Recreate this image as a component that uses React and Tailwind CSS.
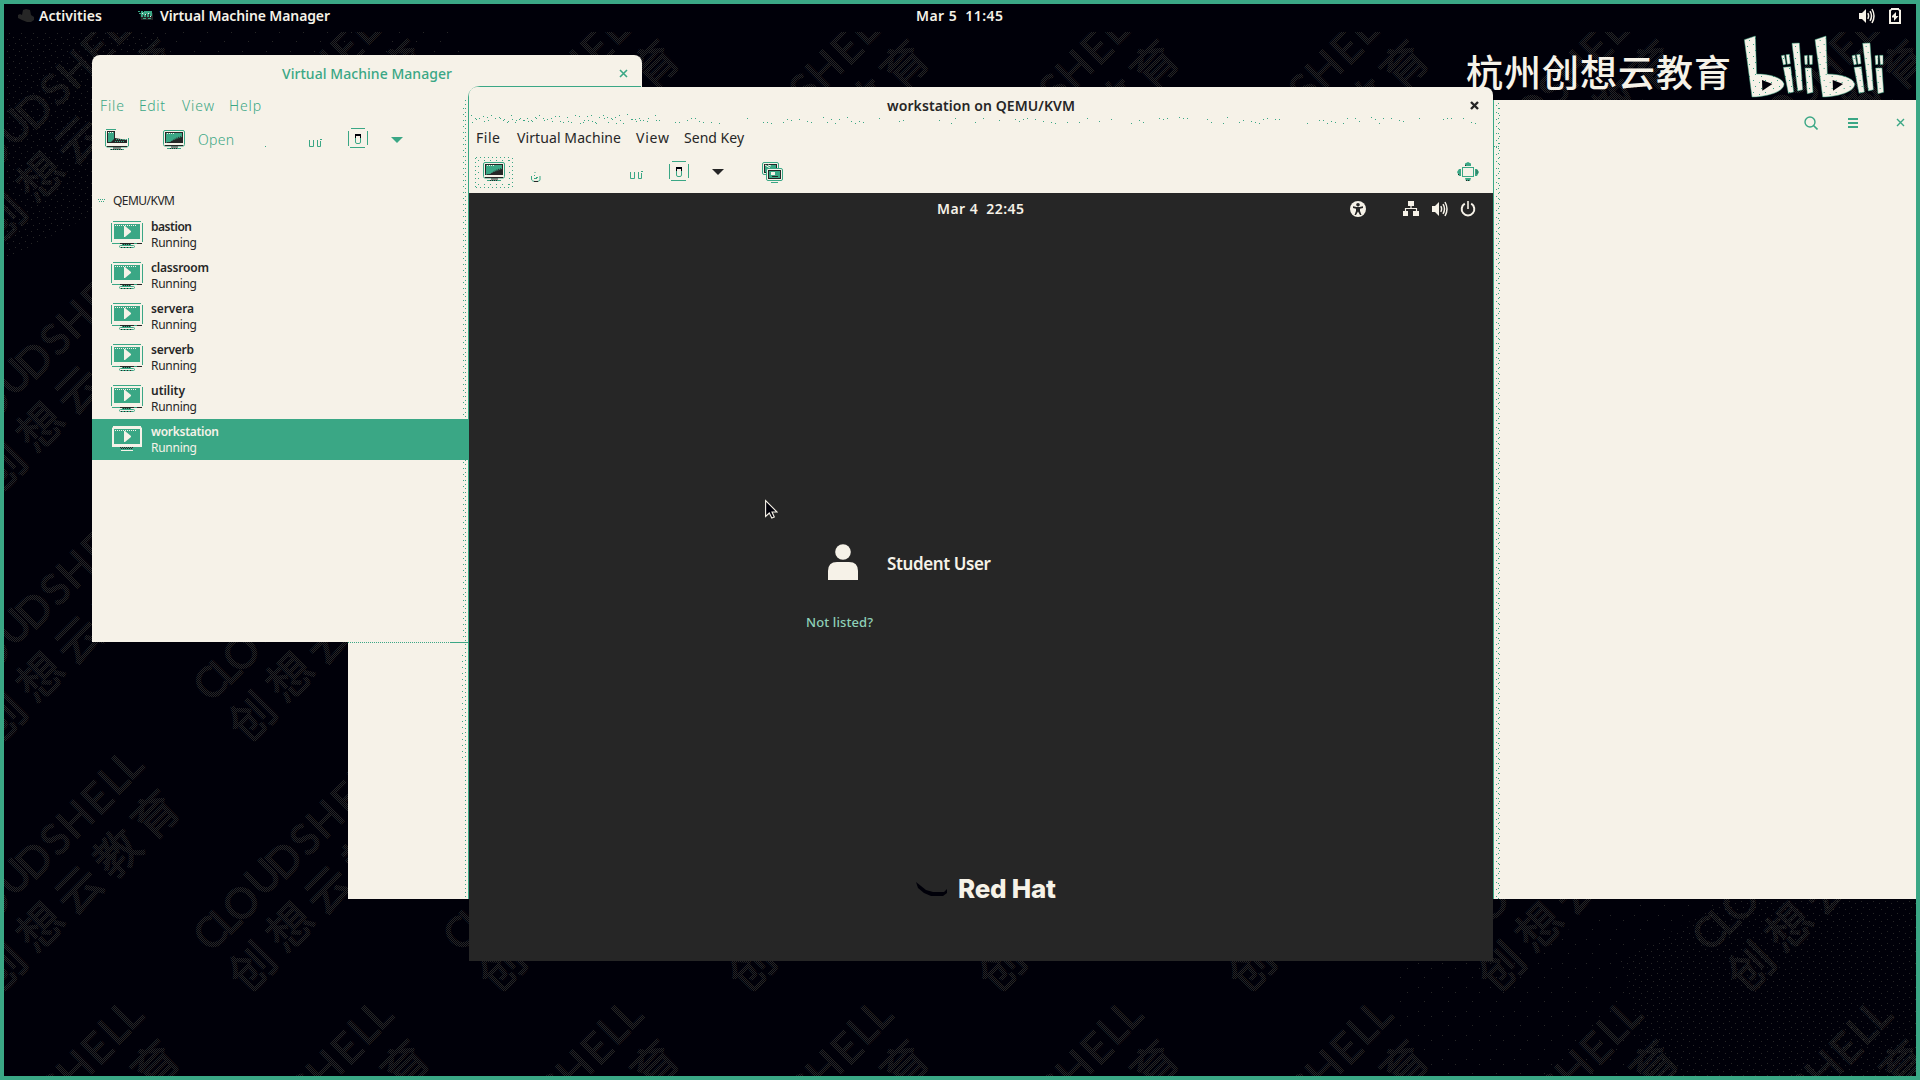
import { useLayoutEffect, useRef, useState } from "react";

const C = { teal: "#3aa785", cream: "#f6f2e8", dark: "#262626", black: "#000009" };

/* Text whose tracking is adjusted so that it spans exactly w pixels. */
function Fit({ w, className = "", children }) {
  const ref = useRef(null);
  const [ls, setLs] = useState(0);
  useLayoutEffect(() => {
    const n = String(children).length;
    const natural = ref.current.getBoundingClientRect().width - ls * n;
    setLs((w - natural) / (n - 1));
  }, [w, children]);
  return (
    <span ref={ref} className={"inline-block whitespace-pre " + className} style={{ letterSpacing: ls + "px", marginRight: -ls + "px" }}>
      {children}
    </span>
  );
}

function Svg({ w, h, className = "", children }) {
  return (
    <svg width={w} height={h} viewBox={`0 0 ${w} ${h}`} className={"shrink-0 " + className}>
      {children}
    </svg>
  );
}

/* ---------- wallpaper ---------- */
const LATIN = [
  ["C", 210, 933], ["L", 225, 919], ["O", 241, 903], ["U", 263, 877], ["D", 284, 860],
  ["S", 305, 839], ["H", 325, 819], ["E", 347, 798], ["L", 363, 779], ["L", 377, 764],
];
const HAN = [["创", 252, 967], ["想", 290, 927], ["云", 328, 890], ["教", 367, 853], ["育", 405, 815]];
const TILES = [];
for (let r = -4; r <= 1; r++) for (let c = -2; c <= 7; c++) TILES.push([c * 249.8, r * 250]);

function Wallpaper() {
  return (
    <svg width="1912" height="1044" viewBox="4 32 1912 1044" className="absolute left-[4px] top-[32px]">
      <defs>
        <pattern id="check" width="2" height="2" patternUnits="userSpaceOnUse">
          <path d="M0 0h1v1H0zM1 1h1v1H1z" fill={C.black} />
        </pattern>
        <pattern id="dots" width="12" height="12" patternUnits="userSpaceOnUse">
          <path d="M1 1h1v1H1zM7 3h1v1H7zM3 7h1v1H3zM9 9h1v1H9z" fill={C.dark} />
        </pattern>
        <pattern id="sparse" width="24" height="24" patternUnits="userSpaceOnUse">
          <path d="M2 3h1v1H2zM15 8h1v1H15zM8 17h1v1H8z" fill={C.dark} />
        </pattern>
        <g id="mark" fill={C.dark} stroke={C.dark} strokeLinejoin="round" textAnchor="middle">
          {LATIN.map(([t, x, y], i) => (
            <text key={i} transform={`translate(${x} ${y}) rotate(-45)`} y="15" fontSize="42" strokeWidth="1.200" fontFamily="Lato, sans-serif" fontWeight="400">{t}</text>
          ))}
          {HAN.map(([t, x, y], i) => (
            <text key={i} transform={`translate(${x} ${y}) rotate(-45)`} y="16.500" fontSize="45" strokeWidth="1.400" fontFamily="'Noto Sans CJK SC', sans-serif" fontWeight="400">{t}</text>
          ))}
        </g>
      </defs>
      <rect x="4" y="32" width="1912" height="1044" fill={C.black} />
      {TILES.map(([x, y], i) => <use key={i} href="#mark" x={x} y={y} />)}
      <rect x="4" y="32" width="1912" height="1044" fill="url(#check)" />
      <path d="M4 32H170L92 110V215L4 260z" fill="url(#dots)" />
      <path d="M170 32H460V54H150z" fill="url(#sparse)" />
      <path d="M1916 899V1076H1650L1620 960L1730 899z" fill="url(#dots)" />
      <path d="M1730 899L1620 960L1650 1076H1400V962H1493L1640 899z" fill="url(#sparse)" />
    </svg>
  );
}

/* ---------- icons ---------- */
function Speaker() {
  return (
    <Svg w={16} h={16}>
      <path d="M0 5h3l4-4v14l-4-4H0z" fill={C.cream} />
      <path d="M8.8 5.2q1.6 2.8 0 5.6M11 3.2q3 4.8 0 9.6M13 1q4 7 0 14" fill="none" stroke={C.cream} strokeWidth="1.5" />
    </Svg>
  );
}

function Hat() {
  return (
    <Svg w={16} h={14}>
      <path d="M4 6l1-5 3-1 4 1 1 5 3 2v3l-3 2H9L4 11 0 9V6l2-1z" fill={C.dark} />
    </Svg>
  );
}

function AppIcon() {
  return (
    <Svg w={15} h={10}>
      <path d="M2 2h13v7H3z" fill={C.dark} />
      <path d="M0 0h2v1H0zM3 0h2v1h1V0h8v5h-2V3h-1v3H9V3H8v3H6V4H5v2H3V3H1V2h2zM5 7h3v1H5zM10 7h3v1h-3z" fill={C.teal} />
      <path d="M4 2h1v1H4zM7 3h1v1H7zM10 2h1v1h-1zM12 5h1v1h-1z" fill={C.cream} />
    </Svg>
  );
}

function Battery() {
  return (
    <Svg w={12} h={16}>
      <path d="M2 0h8v1l2 1v14H0V2l2-1z" fill={C.cream} />
      <path d="M3 2h6l1 1v11H2V3z" fill={C.black} />
      <path d="M7 4v4h2.500L5 13V9.500H3V8z" fill={C.cream} />
    </Svg>
  );
}

/* Small monitor of the toolbars, 22 x 20. */
function Monitor() {
  return (
    <Svg w={22} h={20}>
      <rect x=".5" y=".5" width="21" height="15.500" rx="1.500" fill={C.cream} stroke={C.teal} />
      <path d="M2 2h18v11H2z" fill={C.dark} />
      <path d="M3 3h16v3l-4 1-4 2-4 3H3z" fill={C.teal} />
      <path d="M3 12L19 6" stroke={C.teal} strokeWidth="2" strokeDasharray="1 1" />
      <path d="M4 3.500h7" stroke={C.cream} strokeDasharray="1 1" />
      <path d="M2 15.500h18M8 17h7" stroke={C.dark} strokeWidth="1" />
      <path d="M4 18.500h14" stroke={C.teal} />
      <path d="M7 18.500h8" stroke={C.dark} strokeDasharray="1 1" />
    </Svg>
  );
}

function NewVm() {
  return (
    <Svg w={24} h={22}>
      <path d="M1 .5h10M.5 2v15l1.500 1h20l1.500-1V9" fill="none" stroke={C.teal} />
      <path d="M2 2h8v7l12 2v3H2z" fill={C.dark} />
      <path d="M3 3h6v7l-3 3H3z" fill={C.teal} />
      <path d="M3 3.500h6" stroke={C.cream} strokeDasharray="1 1" />
      <path d="M11 10.500h12M10 12.500h10" stroke={C.teal} strokeDasharray="1 1" />
      <path d="M2 17.500h20M8 19h8" stroke={C.dark} />
      <path d="M5 20.500h14" stroke={C.teal} />
      <path d="M6 20.500h11" stroke={C.dark} strokeDasharray="1 1" />
    </Svg>
  );
}

function PauseIcon() {
  return (
    <Svg w={13} h={8}>
      <path d="M.5 1v6.500h4V1M8.500 1v6.500h3V2" fill="none" stroke={C.teal} />
      <path d="M11 0h2v1h-2z" fill={C.teal} />
    </Svg>
  );
}

function PowerSwitch() {
  return (
    <Svg w={20} h={21}>
      <path d="M3 .5h14M.5 3v15M19.500 3v14M2 19.500h15" fill="none" stroke={C.teal} />
      <rect x="7.500" y="6.500" width="5" height="9" rx="1.500" fill={C.cream} stroke={C.teal} />
      <path d="M7 6h6v4h-1V8H8v2H7z" fill={C.black} />
    </Svg>
  );
}

function Caret({ color }) {
  return <Svg w={12} h={6}><path d="M0 0h12L6 6z" fill={color} /></Svg>;
}

function Snapshots() {
  return (
    <Svg w={21} h={21}>
      <rect x=".5" y=".5" width="16" height="12" rx="1.500" fill={C.cream} stroke={C.teal} />
      <path d="M2 2h13v9H2z" fill={C.dark} /><path d="M3 3h11v7H3z" fill={C.teal} />
      <path d="M3 3l5 3M6 3l3 1" stroke={C.cream} />
      <rect x="4.500" y="6.500" width="16" height="12" rx="1.500" fill={C.cream} stroke={C.teal} />
      <path d="M6 8h13v9H6z" fill={C.dark} /><path d="M7 9h11v7H7z" fill={C.teal} />
      <path d="M9 10h4v3H9z" fill={C.cream} /><path d="M10 14h6v1h-6z" fill={C.dark} />
      <path d="M9 20.500h7" stroke={C.teal} />
    </Svg>
  );
}

function Fullscreen() {
  return (
    <Svg w={22} h={21}>
      <rect x="5.500" y="5.500" width="11" height="9" fill="none" stroke={C.teal} />
      <path d="M8 4V1.500L11 0l3 1.500V4zM8 16h6l-1 3h-4zM4 7H2L0 10l2 4h2zM18 7h2l2 3-2 4h-2z" fill={C.teal} />
      <path d="M8 3.500h2M9 18.500h3M1 12.500h2M20 8.500v3" stroke={C.dark} strokeDasharray="1 1" />
    </Svg>
  );
}

function VmIcon({ selected }) {
  const line = selected ? C.cream : C.teal;
  return (
    <Svg w={32} h={27}>
      <path d="M2.500 .5h27l2 2v18l-2 2h-27l-2-2v-18z" fill={C.cream} />
      <path d="M2 .5h28M.5 2v19M31.500 2v19" stroke={line} fill="none" />
      <path d="M3 3h26v15H3z" fill={C.teal} />
      <path d="M4 4.500h21" stroke={C.cream} strokeDasharray="1 1" />
      <path d="M13 5h1l6 5v1l-6 5h-1z" fill={C.cream} />
      {selected ? (
        <>
          <path d="M0 21h32v6H0z" fill={C.teal} />
          <path d="M9 21.500h13M10 22.500h11" stroke={C.dark} strokeDasharray="1 1" />
          <path d="M10 24.500h12" stroke={C.cream} strokeWidth="1" />
          <path d="M31.500 0v27M.5 0v27" stroke={C.teal} />
        </>
      ) : (
        <>
          <path d="M1 22.500h30" stroke={C.dark} />
          <path d="M1 22.500h8M23 22.500h3M11 23.500h9" stroke={C.teal} />
          <path d="M12 23.500h8" stroke={C.dark} strokeDasharray="1 1" />
          <rect x="8.500" y="24.500" width="15" height="2" rx="1" fill="none" stroke={C.teal} />
          <path d="M10 26.500h12" stroke={C.dark} strokeDasharray="1 2" />
        </>
      )}
    </Svg>
  );
}

/* Drawn on a grid of thirds of a pixel. */
function BiliLogo() {
  const half = (
    <>
      <path d="M13 29L46 18L50 132C90 132 126 143 132 161C134 182 90 200 36 201z" />
      <path d="M124 77l9-2 5 28-8 2zM138 74l10-1 3 28-9 2zM156 40l22-1 10 140-15 4zM130 112l22-2 9 76-16 4zM193 77l9-1v27l-7 1zM207 76h10v27l-8 1zM195 114h19l5 73-17 4z" />
      <path d="M66 150L97 162L67 182z" fill={C.black} stroke="none" />
    </>
  );
  return (
    <svg width="150" height="70" viewBox="0 0 450 210" className="shrink-0">
      <defs>
        <pattern id="grain" width="36" height="36" patternUnits="userSpaceOnUse">
          <rect width="36" height="36" fill={C.cream} />
          <path d="M3 6h3v3H3zM21 12h3v3h-3zM9 24h3v3H9zM27 30h3v3h-3z" fill={C.teal} />
        </pattern>
      </defs>
      <g fill="url(#grain)" stroke={C.teal} strokeWidth="1.500">{half}<g transform="translate(212 0)">{half}</g></g>
    </svg>
  );
}

/* ---------- window dressing ---------- */
const SPECKS = (() => {
  let s = 7, d = "";
  const rnd = () => ((s = (s * 16807) % 2147483647) / 2147483647);
  for (let x = 2; x < 1020; x += 4) {
    const dense = x < 190;
    if (rnd() < (dense ? 0.95 : 0.55)) d += `M${x} ${Math.round(10 - rnd() * (dense ? 9 : 6))}h1v1h-1z`;
    if (dense && rnd() < 0.6) d += `M${x + 1} ${Math.round(10 - rnd() * 5)}h1v1h-1z`;
  }
  return d;
})();

const ui = "font-['Noto_Sans','Open_Sans',sans-serif]";
const VMS = ["bastion", "classroom", "servera", "serverb", "utility", "workstation"];
const NAME_W = { bastion: 41, classroom: 58, servera: 43, serverb: 43, utility: 34, workstation: 68 };

function TopBar() {
  return (
    <div className="absolute left-0 top-0 flex h-[32px] w-full items-center bg-[#000009] pb-px pl-[18px] text-[14px] font-semibold text-[#f6f2e8]">
      <Hat />
      <Fit w={63} className="ml-[5px]">Activities</Fit>
      <div className="ml-[36px] flex items-center"><AppIcon /></div>
      <Fit w={170} className="ml-[7px]">Virtual Machine Manager</Fit>
      <div className="ml-[586px]"><Fit w={87}>Mar 5  11:45</Fit></div>
      <div className="ml-auto mr-[19px] flex items-center gap-[14px]"><Speaker /><Battery /></div>
    </div>
  );
}

function BackWindow() {
  return (
    <div className="absolute left-[348px] top-[100px] flex h-[799px] w-[1568px] items-start bg-[#f6f2e8]">
      <div className="ml-auto mr-[11px] flex h-[45px] items-center">
        <Svg w={14} h={14} className="mr-[30px]">
          <circle cx="6" cy="6" r="5" fill="none" stroke={C.teal} strokeWidth="1.400" />
          <path d="M9.500 9.500l4 4" stroke={C.teal} strokeWidth="1.600" />
        </Svg>
        <Svg w={10} h={10} className="mr-[38px]">
          <path d="M0 1h10M0 5h10M0 9h10" stroke={C.teal} strokeWidth="2" />
        </Svg>
        <Svg w={9} h={9}><path d="M1 1l7 7M8 1L1 8" stroke={C.teal} strokeWidth="1.400" /></Svg>
      </div>
    </div>
  );
}

function ManagerWindow() {
  return (
    <div className="absolute left-[92px] top-[55px] flex h-[587px] w-[550px] flex-col rounded-t-[8px] bg-[#f6f2e8]">
      <div className="flex h-[38px] items-center pb-[2px] pl-[190px] text-[14px] font-medium text-[#3aa785]">
        <Fit w={170}>Virtual Machine Manager</Fit>
        <Svg w={9} h={9} className="ml-auto mr-[14px]"><path d="M1 1l7 7M8 1L1 8" stroke={C.teal} strokeWidth="1.600" /></Svg>
      </div>
      <div className="flex h-[26px] items-center pb-[2px] pl-[8px] text-[14px] font-light text-[#3aa785]">
        <Fit w={24}>File</Fit>
        <Fit w={26} className="ml-[15px]">Edit</Fit>
        <Fit w={32} className="ml-[17px]">View</Fit>
        <Fit w={32} className="ml-[15px]">Help</Fit>
      </div>
      <div className="flex h-[42px] items-center pl-[13px] text-[14px] font-light text-[#3aa785]">
        <NewVm />
        <div className="ml-[34px]"><Monitor /></div>
        <Fit w={36} className="mb-[2px] ml-[13px]">Open</Fit>
        <div className="ml-[31px] mt-[13px] size-px bg-[#3aa785]" />
        <div className="ml-[43px] mt-[5px]"><PauseIcon /></div>
        <div className="mb-[3px] ml-[26px]"><PowerSwitch /></div>
        <div className="ml-[23px]"><Caret color={C.teal} /></div>
      </div>
      <div className="h-[26px]" />
      <div className="flex h-[27px] items-center pl-[6px] text-[12px] text-[#262626]">
        <Svg w={8} h={4}><path d="M0 .5h8M1 2.500h5" stroke={C.teal} strokeDasharray="1 1" /></Svg>
        <Fit w={62} className="ml-[7px]">QEMU/KVM</Fit>
      </div>
      {VMS.map((name) => {
        const sel = name === "workstation";
        return (
          <div key={name} className={"flex h-[41px] items-center pl-[19px] text-[12px] leading-[16px] " + (sel ? "bg-[#3aa785] text-[#f6f2e8]" : "text-[#262626]")}>
            <VmIcon selected={sel} />
            <div className="ml-[8px] flex flex-col items-start">
              <Fit w={NAME_W[name]} className="font-semibold">{name}</Fit>
              <Fit w={46}>Running</Fit>
            </div>
          </div>
        );
      })}
    </div>
  );
}

function Shadows() {
  return (
    <svg width="1040" height="815" viewBox="460 86 1040 815" fill="none" stroke={C.teal} className="absolute left-[460px] top-[86px]">
      <path d="M468.500 899V97Q469 87 480 86.500H641" />
      <path d="M465.500 100V899" strokeDasharray="1 3" />
      <path d="M463.500 108V640M462.500 655V760" strokeDasharray="1 5" />
      <path d="M1493.500 100V899" />
      <path d="M1496.500 105V899M1499.500 108V899" strokeDasharray="1 6" />
      <path d="M1498.500 103V899" strokeDasharray="1 4" />
      <path d="M1494 146.500h8" strokeDasharray="1 1" />
    </svg>
  );
}

function GuestScreen() {
  return (
    <div className="flex flex-1 flex-col bg-[#262626] text-[#f6f2e8]">
      <div className="flex h-[32px] items-center pl-[468px] text-[14px] font-semibold">
        <Fit w={87} className="mb-[2px]">Mar 4  22:45</Fit>
        <div className="ml-auto mr-[17px] flex items-center">
          <Svg w={16} h={16} className="mr-[37px]">
            <circle cx="8" cy="8" r="8" fill={C.cream} />
            <circle cx="8" cy="3.700" r="1.800" fill={C.dark} />
            <path d="M3 5.300l3.500 .8h3L13 5.300v1.600l-3 .9v2.200L11.500 14H10L8 10.500 6 14H4.500L6 10V7.800l-3-.9z" fill={C.dark} />
          </Svg>
          <Svg w={16} h={16} className="mr-[13px]">
            <path d="M5 0h6v5H5zM0 10h5v5H0zM10 10h6v5h-6z" fill={C.cream} />
            <path d="M8 5v3M2.500 10V7.500h11V10" fill="none" stroke={C.cream} strokeWidth="1.200" />
          </Svg>
          <Speaker />
          <Svg w={16} h={16} className="ml-[12px]">
            <path d="M4.800 2.700a6.300 6.300 0 1 0 6.400 0" fill="none" stroke={C.cream} strokeWidth="2" />
            <path d="M8 0v8" stroke={C.cream} strokeWidth="1.600" />
          </Svg>
        </div>
      </div>
      <div className="mt-[318px] flex h-[40px] items-center pl-[359px] text-[17px] font-semibold">
        <Svg w={30} h={36} className="mb-[2px]">
          <circle cx="15" cy="8" r="7.800" fill={C.cream} />
          <path d="M0 36V27Q0 18 9 18H21Q30 18 30 27V36z" fill={C.cream} />
        </Svg>
        <Fit w={104} className="ml-[29px] mt-[2px]">Student User</Fit>
      </div>
      <div className="mt-[30px] flex h-[20px] items-center pl-[337px] text-[13px] font-medium text-[#8fd0b8]">
        <Fit w={67}>Not listed?</Fit>
      </div>
      <div className="mt-[243px] flex h-[25px] items-center pl-[447px]">
        <Svg w={31} h={14}>
          <path d="M0 0L10 8L17 10H28L31 7V11L27 14H15L8 11L2 6Z" fill={C.black} />
        </Svg>
        <Fit w={98} className="ml-[11px] font-['Inter',sans-serif] text-[26px] font-extrabold">Red Hat</Fit>
      </div>
    </div>
  );
}

function ViewerWindow() {
  return (
    <div className="absolute left-[469px] top-[87px] flex h-[874px] w-[1024px] flex-col overflow-hidden rounded-t-[8px] bg-[#f6f2e8] text-[14px] text-[#262626]">
      <div className="relative flex h-[38px] items-center pb-[2px] pl-[418px] font-semibold">
        <Svg w={1024} h={12} className="absolute left-0 top-[26px]"><path d={SPECKS} fill={C.teal} /></Svg>
        <Fit w={188}>workstation on QEMU/KVM</Fit>
        <Svg w={9} h={9} className="ml-auto mr-[14px]"><path d="M1 1l7 7M8 1L1 8" stroke={C.dark} strokeWidth="2.400" /></Svg>
      </div>
      <div className="flex h-[26px] items-center pb-[2px] pl-[7px]">
        <Fit w={24}>File</Fit>
        <Fit w={104} className="ml-[17px]">Virtual Machine</Fit>
        <Fit w={33} className="ml-[15px]">View</Fit>
        <Fit w={60} className="ml-[15px]">Send Key</Fit>
      </div>
      <div className="flex h-[42px] items-center pl-[6px]">
        <div className="relative flex h-[31px] w-[38px] items-center justify-center">
          <Svg w={38} h={31} className="absolute">
            <path d="M1 .5h36M1 30.500h36M.5 1v29M37.500 1v29" stroke={C.teal} strokeDasharray="1 3" />
            <path d="M3 3.500h32M3 27.500h32M3.500 3v25M34.500 3v25" stroke={C.teal} strokeDasharray="1 5" />
          </Svg>
          <Monitor />
        </div>
        <Svg w={10} h={11} className="ml-[18px] mt-[8px]">
          <path d="M.5 5v3q0 2.500 4.500 2.500t4-2.500V5M3 4.500h1M5 6.500h2M4 1v1M3 7.500h3" fill="none" stroke={C.teal} strokeWidth="1" />
          <path d="M3 10.500h4" stroke={C.dark} />
        </Svg>
        <div className="ml-[89px] mt-[5px]"><PauseIcon /></div>
        <div className="mb-[1px] ml-[26px]"><PowerSwitch /></div>
        <div className="ml-[23px]"><Caret color={C.dark} /></div>
        <div className="ml-[38px]"><Snapshots /></div>
        <div className="ml-auto mr-[14px]"><Fullscreen /></div>
      </div>
      <GuestScreen />
    </div>
  );
}

export default function App() {
  return (
    <div className={"relative h-[1080px] w-[1920px] overflow-hidden bg-[#000009] " + ui}>
      <Wallpaper />
      <TopBar />
      <div className="absolute left-[1466px] top-[30px] flex items-start text-[#f6f2e8]">
        <Fit w={265} className="mt-[15px] font-['Noto_Sans_CJK_SC',sans-serif] text-[37px] font-medium leading-[52px]">杭州创想云教育</Fit>
        <div className="ml-[9px]"><BiliLogo /></div>
      </div>
      <BackWindow />
      <ManagerWindow />
      <Svg w={120} h={1} className="absolute left-[348px] top-[642px]">
        <path d="M0 .5h102" stroke={C.teal} strokeDasharray="1 1" /><path d="M102 .5h18" stroke={C.teal} />
      </Svg>
      <Shadows />
      <ViewerWindow />
      <Svg w={13} h={20} className="absolute left-[765px] top-[499px]">
        <path d="M.6 1.500V17.500L4.300 14L6.800 19L9.300 18L7 13H12z" fill={C.black} stroke={C.cream} strokeWidth="1.100" />
      </Svg>
      <div className="pointer-events-none absolute inset-0 border-4 border-[#3aa785]" />
    </div>
  );
}
